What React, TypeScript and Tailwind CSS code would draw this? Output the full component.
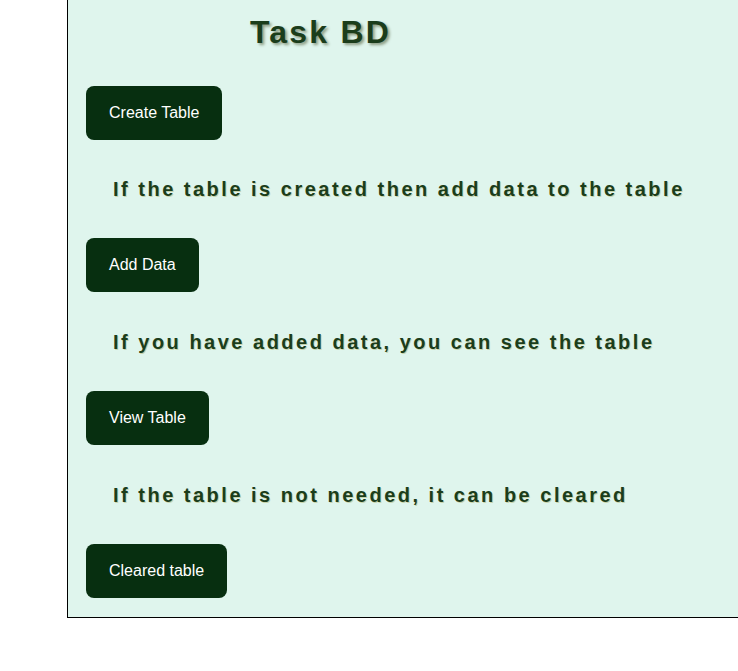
import React from "react";

const btn =
  "rounded-[8px] bg-[#072f10] text-white text-[16px] h-[54px] px-[23px] leading-none font-['Liberation_Sans',Arial,sans-serif]";
const heading =
  "ml-[27px] text-[20px] font-bold tracking-[2.5px] text-[#1b3d1b] [text-shadow:1px_1px_0_rgba(170,170,90,0.45)] font-['Liberation_Sans',Arial,sans-serif]";

export default function App() {
  return (
    <div className="w-[738px] h-[671px] overflow-hidden bg-white font-['Liberation_Sans',Arial,sans-serif]">
      <div className="ml-[67px] w-[700px] h-[618px] bg-[#dff5ed] border-l border-b border-black pl-[18px]">
        <h1 className="pl-[164px] pt-[16px] text-[32px] font-bold tracking-[2.2px] text-[#1b3d1b] leading-none h-[86px] [text-shadow:2px_2px_3px_#8a9a80]">
          Task BD
        </h1>
        <div className="flex flex-col items-start">
          <button className={btn}>Create Table</button>
          <div className="h-[98px] flex items-center">
            <p className={heading}>If the table is created then add data to the table</p>
          </div>
          <button className={btn}>Add Data</button>
          <div className="h-[99px] flex items-center">
            <p className={heading}>If you have added data, you can see the table</p>
          </div>
          <button className={btn}>View Table</button>
          <div className="h-[99px] flex items-center">
            <p className={heading}>If the table is not needed, it can be cleared</p>
          </div>
          <button className={btn}>Cleared table</button>
        </div>
      </div>
    </div>
  );
}
